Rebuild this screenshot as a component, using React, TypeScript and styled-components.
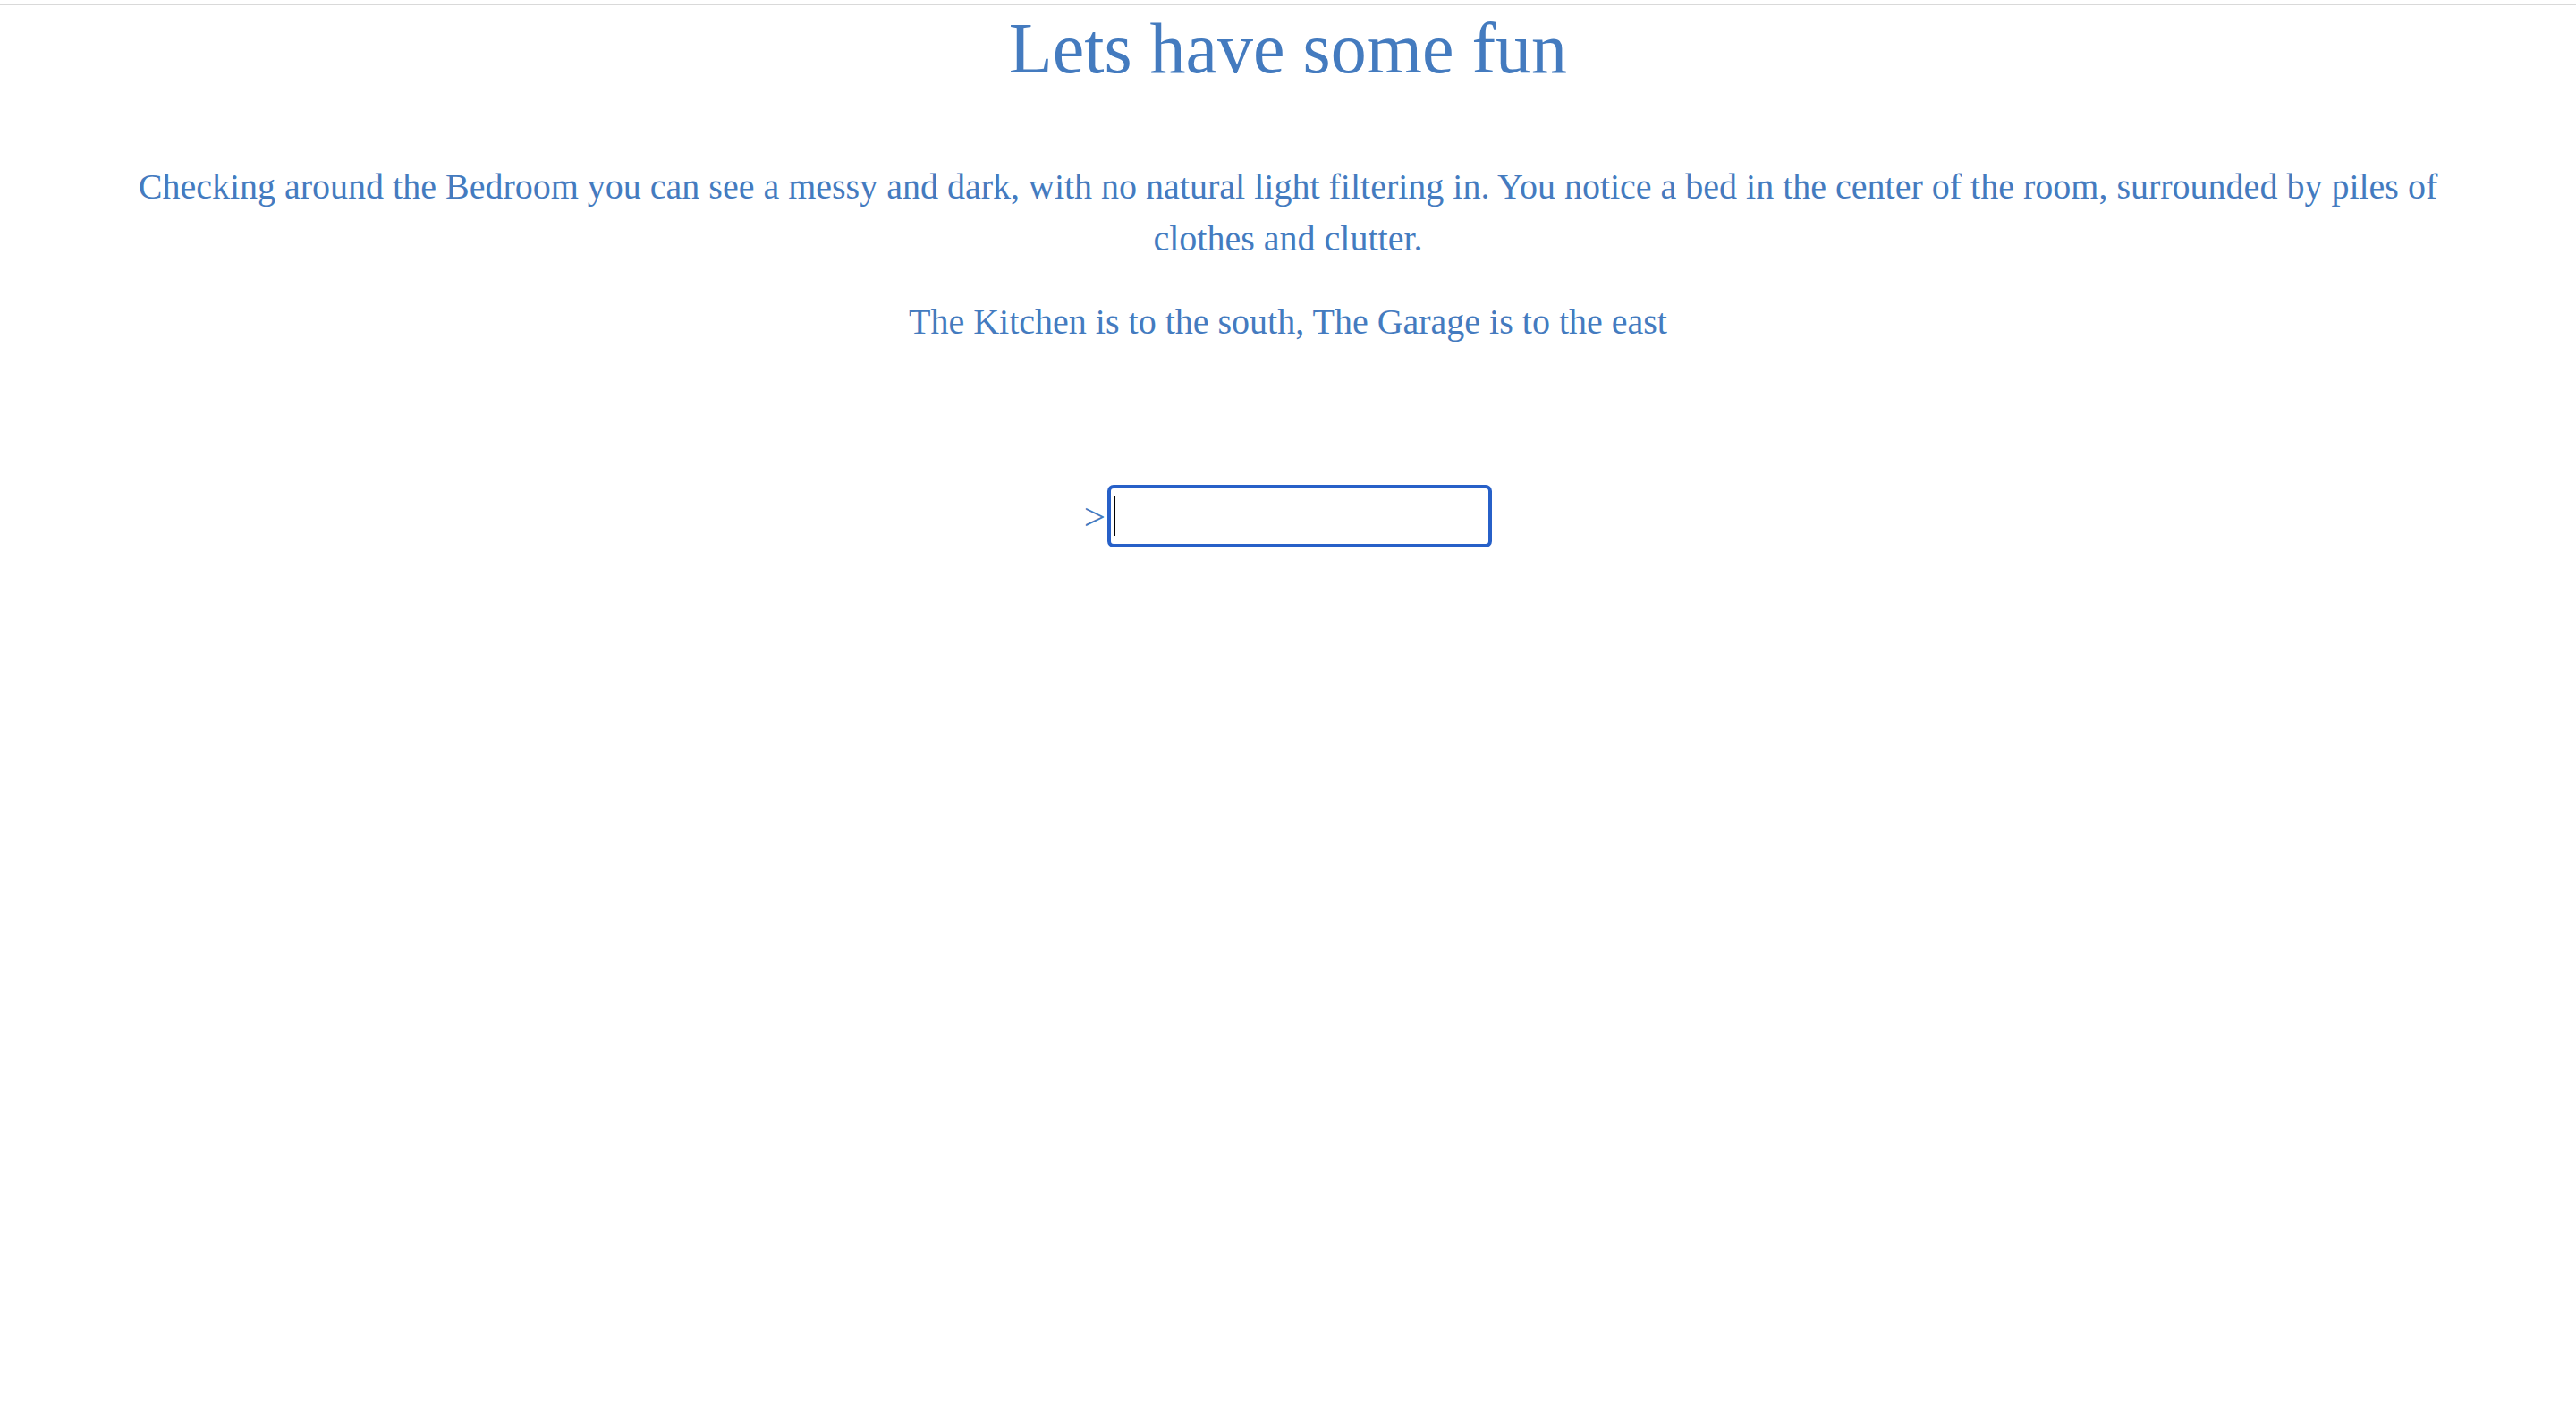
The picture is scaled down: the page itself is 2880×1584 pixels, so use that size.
import React from "react";
import styled, { createGlobalStyle } from "styled-components";

const GlobalStyle = createGlobalStyle`
  html, body {
    margin: 0;
    padding: 0;
    background: #ffffff;
  }
  body {
    font-family: "Liberation Serif", "Times New Roman", serif;
  }
`;

const Page = styled.main`
  min-height: 1584px;
  box-sizing: border-box;
  border-top: 2px solid #d9d9d9;
  margin-top: 4px;
  display: flex;
  flex-direction: column;
  align-items: center;
  padding: 0 140px;
  color: #447bbf;
`;

const Title = styled.h1`
  margin: 3px 0 0;
  font-size: 80px;
  font-weight: 400;
  line-height: normal;
  text-align: center;
`;

const Paragraph = styled.p<{ $top: number }>`
  margin: ${(p) => p.$top}px 0 0;
  font-size: 40px;
  line-height: 58px;
  text-align: center;
`;

const PromptRow = styled.form`
  margin-top: 153px;
  display: flex;
  align-items: center;
  gap: 2px;
`;

const PromptMark = styled.span`
  font-size: 43px;
  line-height: 1;
  color: #447bbf;
`;

const Field = styled.div`
  position: relative;
  display: flex;
`;

const CommandInput = styled.input`
  box-sizing: border-box;
  width: 430px;
  height: 70px;
  border: 4px solid #2760c8;
  border-radius: 7px;
  outline: none;
  padding: 0 6px;
  font-family: "Liberation Serif", "Times New Roman", serif;
  font-size: 40px;
  color: #000;
  caret-color: transparent;
  background: #fff;
`;

const Caret = styled.span`
  position: absolute;
  left: 7px;
  top: 12px;
  width: 2px;
  height: 45px;
  background: #000;
  pointer-events: none;
`;

export default function App() {
  return (
    <>
      <GlobalStyle />
      <Page>
        <Title>Lets have some fun</Title>
        <Paragraph $top={80}>
          Checking around the Bedroom you can see a messy and dark, with no
          natural light filtering in. You notice a bed in the center of the
          room, surrounded by piles of clothes and clutter.
        </Paragraph>
        <Paragraph $top={35}>
          The Kitchen is to the south, The Garage is to the east
        </Paragraph>
        <PromptRow onSubmit={(e) => e.preventDefault()}>
          <PromptMark>&gt;</PromptMark>
          <Field>
            <CommandInput type="text" autoFocus aria-label="command" />
            <Caret aria-hidden="true" />
          </Field>
        </PromptRow>
      </Page>
    </>
  );
}
